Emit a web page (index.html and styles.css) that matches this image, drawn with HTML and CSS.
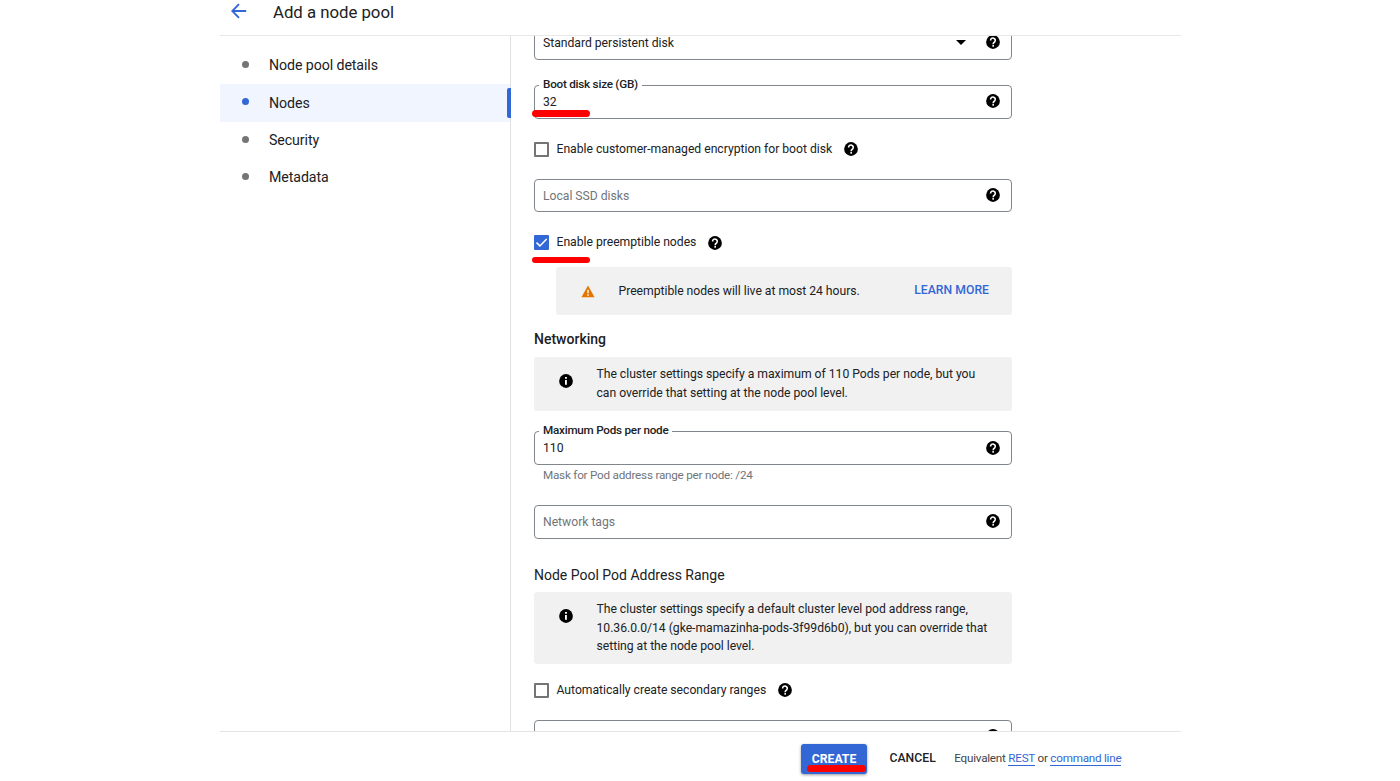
FILE: index.html
```html
<!DOCTYPE html>
<html lang="en">
<head>
<meta charset="utf-8">
<title>Add a node pool</title>
<link rel="stylesheet" href="styles.css">
</head>
<body>
<svg width="0" height="0" class="defs">
  <symbol id="help" viewBox="0 0 24 24"><circle cx="12" cy="12" r="11.8" fill="#000"/><path d="M7.9 9.4a4 4 0 1 1 6.9 2.5c-1.4 1.3-2.5 1.6-2.5 3.8" fill="none" stroke="#fff" stroke-width="2.7"/><rect x="10.9" y="17.2" width="2.8" height="2.8" fill="#fff"/></symbol>
  <symbol id="info" viewBox="0 0 24 24"><circle cx="12" cy="12" r="11.8" fill="#000"/><path d="M10.3 5.2h3.2v3h-3.2zM10.3 10.2h3.2v8.4h-3.2z" fill="#fff"/></symbol>
</svg>
<div class="app">
  <header class="header">
    <svg class="back" viewBox="0 0 16 16"><path d="M15.2 8H1.6M8 1.2L1.3 8L8 14.8" fill="none" stroke="#3367d6" stroke-width="1.9"/></svg>
    <h1 class="title">Add a node pool</h1>
  </header>
  <div class="body">
    <nav class="nav">
      <a class="nav-item"><i class="dot"></i><span>Node pool details</span></a>
      <a class="nav-item active"><i class="dot"></i><span>Nodes</span></a>
      <a class="nav-item"><i class="dot"></i><span>Security</span></a>
      <a class="nav-item"><i class="dot"></i><span>Metadata</span></a>
    </nav>
    <main class="main">
      <div class="field disk-type"><span class="value">Standard persistent disk</span><i class="caret"></i><svg class="icon"><use href="#help"/></svg></div>
      <div class="field boot"><span class="label">Boot disk size (GB)</span><span class="value">32</span><svg class="icon"><use href="#help"/></svg><i class="mark mark-boot"></i></div>
      <div class="check encryption"><i class="box"></i><span>Enable customer-managed encryption for boot disk</span><svg class="icon"><use href="#help"/></svg></div>
      <div class="field ssd"><span class="value muted">Local SSD disks</span><svg class="icon"><use href="#help"/></svg></div>
      <div class="check preempt"><i class="box checked"><svg viewBox="0 0 15 15"><path d="M2.5 7.6l3.4 3.3l6.8-7" fill="none" stroke="#fff" stroke-width="1.5"/></svg></i><span>Enable preemptible nodes</span><svg class="icon"><use href="#help"/></svg><i class="mark mark-preempt"></i></div>
      <div class="notice warning"><svg class="warn" viewBox="0 0 14 13"><path d="M7 .6L13.6 12.2H.4z" fill="#e37400"/><path d="M6.3 4.8h1.4v3.5H6.3zM6.3 9.3h1.4v1.4H6.3z" fill="#fff"/></svg><span class="warn-text">Preemptible nodes will live at most 24 hours.</span><a class="learn">LEARN MORE</a></div>
      <h2 class="heading bold">Networking</h2>
      <div class="notice net-info"><svg class="icon"><use href="#info"/></svg><p>The cluster settings specify a maximum of 110 Pods per node, but you<br>can override that setting at the node pool level.</p></div>
      <div class="field pods"><span class="label">Maximum Pods per node</span><span class="value">110</span><svg class="icon"><use href="#help"/></svg></div>
      <div class="hint">Mask for Pod address range per node: /24</div>
      <div class="field tags"><span class="value muted">Network tags</span><svg class="icon"><use href="#help"/></svg></div>
      <h2 class="heading range">Node Pool Pod Address Range</h2>
      <div class="notice range-info"><svg class="icon"><use href="#info"/></svg><p>The cluster settings specify a default cluster level pod address range,<br>10.36.0.0/14 (gke-mamazinha-pods-3f99d6b0), but you can override that<br>setting at the node pool level.</p></div>
      <div class="check auto"><i class="box"></i><span>Automatically create secondary ranges</span><svg class="icon"><use href="#help"/></svg></div>
      <div class="field last"><svg class="icon"><use href="#help"/></svg></div>
    </main>
  </div>
  <footer class="footer">
    <button class="create">CREATE<i class="mark mark-create"></i></button>
    <button class="cancel">CANCEL</button>
    <span class="equiv">Equivalent <a>REST</a> or <a>command line</a></span>
  </footer>
</div>
</body>
</html>
```
FILE: styles.css
```css
* { box-sizing: border-box; }
body { margin: 0; background: #fff; color: #202124; font: 12.2px/18.7px Roboto, sans-serif; letter-spacing: -.025px; overflow: hidden; }
.defs { position: absolute; }
.app { width: 961px; height: 781px; margin-left: 220px; display: flex; flex-direction: column; }
.header { height: 36px; flex: none; display: flex; align-items: flex-start; border-bottom: 1px solid #e8e8e8; padding-left: 11px; }
.back { width: 16px; height: 16px; margin-top: 3px; }
.title { margin: 0 0 0 26px; font-size: 16.8px; font-weight: 400; line-height: 24px; letter-spacing: -.02px; }
.body { flex: 1; min-height: 0; display: flex; }
.nav { width: 291px; border-right: 1px solid #e0e0e0; padding-top: 11px; }
.nav-item { height: 37.3px; display: flex; align-items: center; font-size: 14.2px; letter-spacing: -.09px; padding-left: 22px; }
.dot { width: 7px; height: 7px; border-radius: 50%; background: #757575; margin: -2px 20px 0 0; }
.active { background: #f0f5ff; position: relative; }
.active .dot { background: #3367d6; }
.active::after { content: ""; position: absolute; right: -.5px; top: 4px; width: 4px; height: 30px; background: #3367d6; border-radius: 2px 0 0 2px; }
.main { flex: 1; min-width: 0; padding-left: 23px; overflow: hidden; display: flex; flex-direction: column; }
.main > * { width: 478px; flex: none; }
.field { height: 34px; position: relative; display: flex; align-items: center; border: 1px solid #80868b; border-radius: 4px; padding: 0 11px 0 8px; }
.value { flex: 1; }
.muted { color: #70757a; }
.icon { width: 14px; height: 14px; flex: none; margin: -2px 0 0 auto; }
.label { position: absolute; left: 4px; top: -11px; padding: 0 4px; background: #fff; line-height: 19px; font-weight: 500; font-size: 11.7px; letter-spacing: -.24px; }
.caret { border: 5px solid transparent; border-top-color: #000; border-bottom: 0; margin: -1px 20px 0 0; }
.disk-type { margin-top: -10px; }
.boot { margin-top: 25px; }
.check { height: 15px; display: flex; align-items: center; position: relative; }
.check .icon { margin-left: 11.5px; }
.box { width: 15px; height: 15px; border: 2px solid #757575; border-radius: 1px; margin-right: 7.5px; flex: none; }
.checked { border: 0; background: #3367d6; }
.checked svg { display: block; }
.encryption { margin-top: 23px; }
.ssd { height: 33px; margin-top: 22px; }
.ssd .value { padding-top: 1px; }
.preempt { margin-top: 23px; }
.preempt .icon { margin-top: 0; }
.pods .icon { margin-top: 0; }
.mark { position: absolute; height: 6.6px; background: #f00; border-radius: 4px; }
.mark-boot { left: -3.5px; top: 24px; width: 58.5px; }
.mark-preempt { left: -2.5px; top: 21.5px; width: 58.5px; }
.mark-create { left: 5.5px; bottom: 2.3px; width: 59px; }
.notice { background: #f1f1f1; border-radius: 3px; display: flex; }
.main > .warning { width: 456px; height: 48px; margin: 17px 0 0 22px; align-items: center; padding: 0 23px 0 25px; }
.warn { width: 14px; height: 13px; margin-top: 1px; }
.warn-text { margin-left: 23.5px; }
.learn { margin: -2px 0 0 auto; color: #3367d6; font-weight: 500; letter-spacing: .03px; }
.heading { margin: 14px 0 0; font-size: 14px; line-height: 20px; font-weight: 400; letter-spacing: 0; }
.bold { font-weight: 500; }
.net-info { height: 54px; margin-top: 8px; }
.notice .icon { margin: 17px 0 0 24.5px; }
.notice p { margin: 8px 0 0 24px; }
.pods { margin-top: 20px; }
.hint { color: #70757a; font-size: 11.7px; line-height: 20px; padding-left: 9px; letter-spacing: -.22px; }
.tags { margin-top: 20px; }
.range { margin-top: 26px; }
.range-info { height: 72px; margin-top: 7px; }
.auto { margin-top: 19px; }
.last { margin-top: 22px; }
.footer { height: 50px; flex: none; border-top: 1px solid #e4e4e4; display: flex; align-items: flex-start; padding: 12px 0 0 581px; }
button { font: 500 12.2px/29px Roboto, sans-serif; letter-spacing: .03px; border: 0; padding: 0; background: none; }
.create { position: relative; width: 66px; height: 30px; color: #fff; font-weight: 700; background: #3367d6; border-radius: 3px; box-shadow: 0 1px 3px #0006; }
.cancel { margin-left: 22.5px; color: #202124; }
.equiv { margin-left: 18.5px; line-height: 29px; font-size: 11.7px; letter-spacing: -.24px; color: #444; }
.equiv a { color: #3367d6; border-bottom: 1px solid #3367d6; }
```
